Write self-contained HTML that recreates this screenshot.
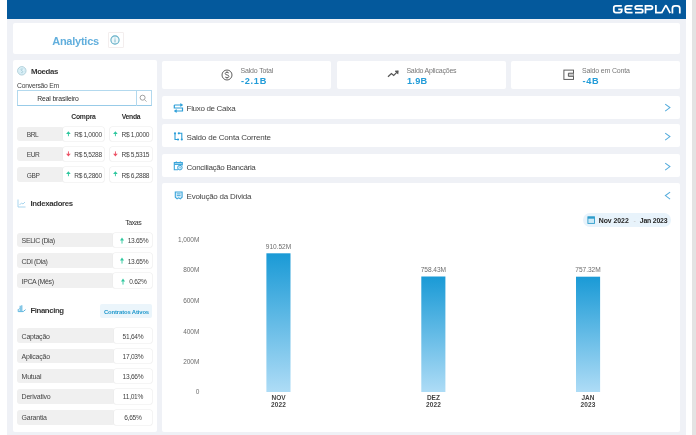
<!DOCTYPE html>
<html><head><meta charset="utf-8">
<style>
*{margin:0;padding:0;box-sizing:border-box}
html,body{width:696px;height:435px;overflow:hidden;background:#fff;font-family:"Liberation Sans",sans-serif;color:#555}
.a{position:absolute}
.t{position:absolute;white-space:nowrap;line-height:1}
.card{position:absolute;background:#fff;border-radius:2px}
#wrap{left:7px;top:18px;width:678.8px;height:417px;background:#eff1f6}
#hdr{left:7px;top:0;width:679px;height:18.6px;background:#04599c}
#sb{left:692px;top:0;width:4px;height:435px;background:#e3e3e3}
.row{position:absolute;left:17px;width:135px;height:14.8px}
.lab{position:absolute;left:0;top:0;height:100%;background:#f0f0f0;border-radius:3px}
.cell{position:absolute;top:0;height:100%;background:#fff;border-radius:2px;box-shadow:0 0 0 0.6px #ececec}
.sm{font-size:6.3px;color:#555}
.hd{font-size:7.6px;letter-spacing:-0.2px;font-weight:bold;color:#333}
.nav{font-size:7.4px;color:#555}
</style></head><body><div style="position:absolute;left:0;top:0;width:696px;height:435px;overflow:hidden;filter:blur(0.3px)">
<div class="a" id="wrap"></div>
<div class="a" id="hdr"></div>
<div class="a" id="sb"></div>

<!-- GESPLAN logo -->
<svg class="a" style="left:612px;top:4px" width="70" height="11" viewBox="0 0 70 11" fill="none" stroke="#fff" stroke-width="1.75">
  <path d="M9.8 1.8 H3.8 Q1.8 1.8 1.8 3.8 V6.6 Q1.8 8.6 3.8 8.6 H7.8 Q9.8 8.6 9.8 6.6 V5.4 H6.2"/>
  <path d="M20.6 1.8 H15.3 Q13.3 1.8 13.3 3.8 V6.6 Q13.3 8.6 15.3 8.6 H20.6 M13.5 5.2 H19.6"/>
  <path d="M30.8 1.8 H25 Q23.2 1.8 23.2 3.5 Q23.2 5.2 25 5.2 H29 Q30.8 5.2 30.8 6.9 Q30.8 8.6 29 8.6 H23"/>
  <path d="M33.5 9.4 V1.8 H38.6 Q40.5 1.8 40.5 3.6 Q40.5 5.4 38.6 5.4 H33.5"/>
  <path d="M43.9 1 V8.6 H49.6"/>
  <path d="M49.5 9.2 L53.5 1.9 Q53.9 1.2 54.3 1.9 L58.2 9.2"/>
  <path d="M60.4 9.4 V4.4 Q60.4 1.8 63 1.8 H65.2 Q67.8 1.8 67.8 4.4 V9.4"/>
</svg>

<!-- Analytics card -->
<div class="card" style="left:12.5px;top:23.2px;width:667.5px;height:31.3px"></div>
<div class="a" style="left:107.5px;top:32.3px;width:16px;height:15.7px;border:0.7px solid #f3eeee;border-radius:1px"></div>
<svg class="a" style="left:110.4px;top:34.9px" width="10" height="10" viewBox="0 0 10 10"><circle cx="5" cy="5" r="4.1" fill="#eef8fb" stroke="#62aec6" stroke-width="1.1"/><path d="M5 4.3V7.4M5 2.7V3.5" stroke="#7db9cc" stroke-width="1"/></svg>

<!-- Left card -->
<div class="card" style="left:12.5px;top:60px;width:144.2px;height:371.5px"></div>
<svg class="a" style="left:16.8px;top:66px" width="10" height="10" viewBox="0 0 10 10"><circle cx="4.8" cy="4.8" r="4.2" fill="#e2f4fa" stroke="#a7c9d5" stroke-width="0.9"/><circle cx="4.8" cy="4.8" r="2.9" fill="none" stroke="#c9e6f0" stroke-width="0.6"/><path d="M5.9 3.4 Q5.6 3 4.8 3 Q3.8 3 3.8 3.8 Q3.8 4.6 4.8 4.7 Q5.8 4.8 5.8 5.7 Q5.8 6.5 4.8 6.5 Q4 6.5 3.7 6" fill="none" stroke="#95c0cf" stroke-width="0.7"/></svg>
<div class="a" style="left:17px;top:90.3px;width:135.4px;height:15.4px;border:0.8px solid #b3d9ee;border-bottom:1.2px solid #98cbe8"></div>
<div class="a" style="left:136.2px;top:90.5px;width:0.8px;height:15px;background:#b3d9ee"></div>
<svg class="a" style="left:138.8px;top:93.6px" width="9" height="9" viewBox="0 0 9 9"><circle cx="3.6" cy="3.7" r="2.5" fill="none" stroke="#a0a0a0" stroke-width="1"/><path d="M5.4 5.5 L7.6 7.6" stroke="#a8a8a8" stroke-width="0.9"/></svg>

<!-- currency rows -->
<div class="row" style="top:126.5px"><div class="lab" style="width:47px"></div><div class="cell" style="left:46px;width:41.3px"></div><div class="cell" style="left:93px;width:42.1px"></div></div>
<div class="row" style="top:146.7px"><div class="lab" style="width:47px"></div><div class="cell" style="left:46px;width:41.3px"></div><div class="cell" style="left:93px;width:42.1px"></div></div>
<div class="row" style="top:166.9px"><div class="lab" style="width:47px"></div><div class="cell" style="left:46px;width:41.3px"></div><div class="cell" style="left:93px;width:42.1px"></div></div>


<svg width="0" height="0" style="position:absolute"><defs>
<g id="up"><path d="M2.4 0.2 L4.7 3 H0.1 Z" fill="#2ec79e"/><rect x="1.95" y="2.8" width="0.9" height="2.4" fill="#2ec79e"/></g>
<g id="dn"><path d="M2.4 5.6 L4.7 2.8 H0.1 Z" fill="#ec5063"/><rect x="1.95" y="0.4" width="0.9" height="2.6" fill="#ec5063"/></g>
<g id="up2"><path d="M2 0.4 L4 3.4 H0 Z" fill="#2ec79e"/><rect x="1.55" y="3.2" width="0.9" height="3.4" fill="#2ec79e"/></g>
</defs></svg>

<svg class="a" style="left:65.6px;top:130.8px" width="5" height="6"><use href="#up"/></svg>
<svg class="a" style="left:113px;top:130.8px" width="5" height="6"><use href="#up"/></svg>

<svg class="a" style="left:65.6px;top:151.4px" width="5" height="6"><use href="#dn"/></svg>
<svg class="a" style="left:113px;top:151.4px" width="5" height="6"><use href="#dn"/></svg>

<svg class="a" style="left:65.6px;top:171.2px" width="5" height="6"><use href="#up"/></svg>
<svg class="a" style="left:113px;top:171.2px" width="5" height="6"><use href="#up"/></svg>

<!-- Indexadores -->
<svg class="a" style="left:17px;top:199px" width="9" height="9" viewBox="0 0 9 9" fill="none" stroke="#9fd0ec" stroke-width="0.9"><path d="M1 0.5 V8 H8.5"/><path d="M2.5 6 L4.5 4 L6 5 L8 3"/></svg>

<div class="row" style="top:232.6px"><div class="lab" style="width:97px"></div><div class="cell" style="left:96px;width:39.3px"></div></div>
<div class="row" style="top:252.8px"><div class="lab" style="width:97px"></div><div class="cell" style="left:96px;width:39.3px"></div></div>
<div class="row" style="top:273px"><div class="lab" style="width:97px"></div><div class="cell" style="left:96px;width:39.3px"></div></div>
<svg class="a" style="left:119.5px;top:237.2px" width="4" height="8"><use href="#up2"/></svg>
<svg class="a" style="left:119.5px;top:257.4px" width="4" height="8"><use href="#up2"/></svg>
<svg class="a" style="left:121.3px;top:277.6px" width="4" height="8"><use href="#up2"/></svg>

<!-- Financing -->
<svg class="a" style="left:17px;top:304px" width="10" height="10" viewBox="0 0 10 10" fill="none" stroke="#5db5de" stroke-width="1"><path d="M1.2 5.2 V7.6 H6.2 L8.6 5.6" /><path d="M3.2 7 V1.8 M4.8 7 V1.2" stroke-width="1.1"/><path d="M1.6 5.3 L2.6 4.6" /></svg>
<div class="a" style="left:99.9px;top:304px;width:52px;height:13.7px;background:#ebf5fb;border-radius:2px"></div>

<div class="row" style="top:328.3px"><div class="lab" style="width:98px"></div><div class="cell" style="left:97.4px;width:37.4px"></div></div>
<div class="row" style="top:348.5px"><div class="lab" style="width:98px"></div><div class="cell" style="left:97.4px;width:37.4px"></div></div>
<div class="row" style="top:368.7px"><div class="lab" style="width:98px"></div><div class="cell" style="left:97.4px;width:37.4px"></div></div>
<div class="row" style="top:388.9px"><div class="lab" style="width:98px"></div><div class="cell" style="left:97.4px;width:37.4px"></div></div>
<div class="row" style="top:409.8px"><div class="lab" style="width:98px"></div><div class="cell" style="left:97.4px;width:37.4px"></div></div>

<!-- KPI cards -->
<div class="card" style="left:162.4px;top:60.8px;width:168.6px;height:28.6px"></div>
<div class="card" style="left:337px;top:60.8px;width:168.6px;height:28.6px"></div>
<div class="card" style="left:511px;top:60.8px;width:169px;height:28.6px"></div>

<svg class="a" style="left:221px;top:68.6px" width="12" height="12" viewBox="0 0 12 12" fill="none" stroke="#555" stroke-width="0.95"><circle cx="6" cy="6" r="5"/><path d="M7.9 4.2 Q7.4 3.3 6 3.3 Q4.2 3.3 4.2 4.6 Q4.2 5.7 6 5.9 Q7.9 6.1 7.9 7.4 Q7.9 8.7 6 8.7 Q4.6 8.7 4.1 7.8 M6 2.4 V3.3 M6 8.7 V9.6" stroke-width="0.9"/></svg>

<svg class="a" style="left:387px;top:70px" width="13" height="9" viewBox="0 0 13 9" fill="none" stroke="#555" stroke-width="1.25"><path d="M1 6.8 L4.4 3.5 L6.7 5.4 L9.8 2.4"/><path d="M8 1 L11.3 0.8 L11 4.1 Z" fill="#555" stroke-width="0.6"/></svg>

<svg class="a" style="left:563px;top:69px" width="12" height="12" viewBox="0 0 12 12" fill="none" stroke="#555" stroke-width="0.95"><rect x="0.9" y="1.1" width="9.6" height="9.3"/><path d="M10.5 4.2 H5.4 V7.3 H10.5" fill="#ccc"/></svg>

<!-- Nav cards -->
<div class="card" style="left:162.4px;top:95.6px;width:517.6px;height:23px"></div>
<div class="card" style="left:162.4px;top:124.4px;width:517.6px;height:23px"></div>
<div class="card" style="left:162.4px;top:154.2px;width:517.6px;height:23px"></div>
<div class="card" style="left:162.4px;top:183px;width:517.6px;height:248.5px"></div>

<svg class="a" style="left:173px;top:102.5px" width="11" height="10" viewBox="0 0 11 10" fill="none" stroke="#2b9ed8" stroke-width="1.2"><path d="M1.3 2 H9.2 M1.3 2 V5 H9.5 V8 H1.8"/><path d="M7.6 0.6 L9.6 2 L7.6 3.4 Z" fill="#2b9ed8" stroke-width="0.6"/><path d="M3.4 6.6 L1.4 8 L3.4 9.4 Z" fill="#2b9ed8" stroke-width="0.6"/></svg>
<svg class="a" style="left:173px;top:132px" width="11" height="10" viewBox="0 0 11 10" fill="none" stroke="#2b9ed8" stroke-width="1.1"><path d="M2 1.3 V7.5 H5"/><path d="M5.8 1.3 H8.8 V7.5"/><circle cx="2" cy="1.3" r="1.1" fill="#2b9ed8" stroke="none"/><circle cx="5" cy="7.5" r="1.1" fill="#2b9ed8" stroke="none"/><circle cx="5.8" cy="1.3" r="1.1" fill="#2b9ed8" stroke="none"/><circle cx="8.8" cy="7.5" r="1.1" fill="#2b9ed8" stroke="none"/></svg>
<svg class="a" style="left:173px;top:161px" width="11" height="10" viewBox="0 0 11 10" fill="none" stroke="#3aa5da" stroke-width="1.1"><path d="M5 8.8 H1.3 V1.6 H9.3 V4.5"/><path d="M1.3 3.3 H9.3" stroke-width="1.3"/><path d="M3.3 0.3 V2 M7.3 0.3 V2" stroke-width="0.9"/><circle cx="6.9" cy="6.6" r="2.3" fill="#d7eefa" stroke-width="1"/><path d="M6.9 5.5 V6.8 H7.9" stroke-width="0.6"/></svg>
<svg class="a" style="left:173.8px;top:191px" width="10" height="10" viewBox="0 0 10 10" fill="none" stroke="#3aa5da" stroke-width="1.1"><path d="M1.3 1 H8.1 V6.2 L6.3 7.9 L4.7 6.9 L3.1 7.9 L1.3 6.2 Z" fill="#e3f2fb"/><path d="M2.8 2.9 H6.6 M2.8 4.6 H6.6" stroke-width="0.9"/></svg>

<svg class="a" style="left:664px;top:103px" width="8" height="10" viewBox="0 0 8 10" fill="none" stroke="#55acdc" stroke-width="1.05"><path d="M1.2 1.1 L5.9 4.6 L1.2 8.1"/></svg>
<svg class="a" style="left:664px;top:132px" width="8" height="10" viewBox="0 0 8 10" fill="none" stroke="#55acdc" stroke-width="1.05"><path d="M1.2 1.1 L5.9 4.6 L1.2 8.1"/></svg>
<svg class="a" style="left:664px;top:161.8px" width="8" height="10" viewBox="0 0 8 10" fill="none" stroke="#55acdc" stroke-width="1.05"><path d="M1.2 1.1 L5.9 4.6 L1.2 8.1"/></svg>
<svg class="a" style="left:664px;top:191px" width="8" height="10" viewBox="0 0 8 10" fill="none" stroke="#55acdc" stroke-width="1.05"><path d="M6.1 1.1 L1.4 4.6 L6.1 8.1"/></svg>

<!-- date pill -->
<div class="a" style="left:583px;top:213.4px;width:88.4px;height:14px;background:#e8f3fb;border-radius:7px"></div>
<svg class="a" style="left:586.7px;top:216.4px" width="8" height="8" viewBox="0 0 8 8" fill="none" stroke="#2f9dcc" stroke-width="0.9"><rect x="0.9" y="0.8" width="6.6" height="6.6" fill="#cdeaf7"/><rect x="0.9" y="0.8" width="6.6" height="1.9" fill="#2f9dcc" stroke="none"/></svg>

<!-- chart -->

<svg class="a" style="left:0;top:0" width="696" height="435">
<defs><linearGradient id="bg" x1="0" y1="0" x2="0" y2="1"><stop offset="0" stop-color="#1a9ad6"/><stop offset="1" stop-color="#aedcf6"/></linearGradient></defs>
<rect x="266.4" y="253.3" width="24.1" height="138.7" fill="url(#bg)"/>
<rect x="421.3" y="276.5" width="24.1" height="115.5" fill="url(#bg)"/>
<rect x="576" y="276.7" width="24.1" height="115.3" fill="url(#bg)"/>
</svg>


<div class="t" style="left:52.20px;top:36.00px;font-size:11px;color:#62afdd;font-weight:bold;letter-spacing:-0.247px">Analytics</div>
<div class="t" style="left:31.00px;top:68.00px;font-size:7.8px;color:#363636;font-weight:bold;letter-spacing:-0.339px">Moedas</div>
<div class="t" style="left:17.00px;top:83.00px;font-size:6.8px;color:#444;letter-spacing:-0.246px">Conversão Em</div>
<div class="t" style="left:37.30px;top:96.00px;font-size:6.8px;color:#2e2e2e;letter-spacing:-0.137px">Real brasileiro</div>
<div class="t" style="left:71.20px;top:114.00px;font-size:6.8px;color:#2e2e2e;font-weight:bold;letter-spacing:-0.198px">Compra</div>
<div class="t" style="left:121.70px;top:114.00px;font-size:6.8px;color:#2e2e2e;font-weight:bold;letter-spacing:-0.286px">Venda</div>
<div class="t" style="left:26.80px;top:132.00px;font-size:6.6px;color:#444;letter-spacing:-0.420px">BRL</div>
<div class="t" style="left:74.20px;top:132.00px;font-size:6.6px;color:#444;letter-spacing:-0.315px">R$ 1,0000</div>
<div class="t" style="left:121.50px;top:132.00px;font-size:6.6px;color:#444;letter-spacing:-0.315px">R$ 1,0000</div>
<div class="t" style="left:26.80px;top:152.00px;font-size:6.6px;color:#444;letter-spacing:-0.420px">EUR</div>
<div class="t" style="left:74.20px;top:152.00px;font-size:6.6px;color:#444;letter-spacing:-0.315px">R$ 5,5288</div>
<div class="t" style="left:121.50px;top:152.00px;font-size:6.6px;color:#444;letter-spacing:-0.315px">R$ 5,5315</div>
<div class="t" style="left:26.80px;top:173.00px;font-size:6.6px;color:#444;letter-spacing:-0.420px">GBP</div>
<div class="t" style="left:74.20px;top:173.00px;font-size:6.6px;color:#444;letter-spacing:-0.315px">R$ 6,2860</div>
<div class="t" style="left:121.50px;top:173.00px;font-size:6.6px;color:#444;letter-spacing:-0.315px">R$ 6,2888</div>
<div class="t" style="left:30.40px;top:200.00px;font-size:7.8px;color:#363636;font-weight:bold;letter-spacing:-0.312px">Indexadores</div>
<div class="t" style="left:125.20px;top:219.00px;font-size:7px;color:#333;letter-spacing:-0.439px">Taxas</div>
<div class="t" style="left:21.60px;top:237.00px;font-size:7px;color:#444;letter-spacing:-0.380px">SELIC (Dia)</div>
<div class="t" style="left:127.70px;top:238.00px;font-size:6.6px;color:#444;letter-spacing:-0.300px">13.65%</div>
<div class="t" style="left:21.60px;top:258.00px;font-size:7px;color:#444;letter-spacing:-0.380px">CDI (Dia)</div>
<div class="t" style="left:127.70px;top:259.00px;font-size:6.6px;color:#444;letter-spacing:-0.300px">13.65%</div>
<div class="t" style="left:21.60px;top:278.00px;font-size:7px;color:#444;letter-spacing:-0.380px">IPCA (Mês)</div>
<div class="t" style="left:129.30px;top:279.00px;font-size:6.6px;color:#444;letter-spacing:-0.300px">0.62%</div>
<div class="t" style="left:30.40px;top:307.00px;font-size:7.8px;color:#363636;font-weight:bold;letter-spacing:-0.392px">Financing</div>
<div class="t" style="left:104.00px;top:310.00px;font-size:5.9px;color:#1f98cc;font-weight:bold;letter-spacing:-0.141px">Contratos Ativos</div>
<div class="t" style="left:21.60px;top:333.00px;font-size:7px;color:#444;letter-spacing:-0.230px">Captação</div>
<div class="t" style="left:114.40px;top:334.00px;font-size:6.6px;color:#444;letter-spacing:-0.280px;width:37.4px;text-align:center;text-indent:-0.280px">51,64%</div>
<div class="t" style="left:21.60px;top:353.00px;font-size:7px;color:#444;letter-spacing:-0.230px">Aplicação</div>
<div class="t" style="left:114.40px;top:354.00px;font-size:6.6px;color:#444;letter-spacing:-0.280px;width:37.4px;text-align:center;text-indent:-0.280px">17,03%</div>
<div class="t" style="left:21.60px;top:373.00px;font-size:7px;color:#444;letter-spacing:-0.230px">Mutual</div>
<div class="t" style="left:114.40px;top:374.00px;font-size:6.6px;color:#444;letter-spacing:-0.280px;width:37.4px;text-align:center;text-indent:-0.280px">13,66%</div>
<div class="t" style="left:21.60px;top:393.00px;font-size:7px;color:#444;letter-spacing:-0.230px">Derivativo</div>
<div class="t" style="left:114.40px;top:394.00px;font-size:6.6px;color:#444;letter-spacing:-0.280px;width:37.4px;text-align:center;text-indent:-0.280px">11,01%</div>
<div class="t" style="left:21.60px;top:414.00px;font-size:7px;color:#444;letter-spacing:-0.230px">Garantia</div>
<div class="t" style="left:114.40px;top:415.00px;font-size:6.6px;color:#444;letter-spacing:-0.280px;width:37.4px;text-align:center;text-indent:-0.280px">6,65%</div>
<div class="t" style="left:240.50px;top:67.00px;font-size:7px;color:#777;letter-spacing:-0.165px">Saldo Total</div>
<div class="t" style="left:241.00px;top:77.00px;font-size:9.2px;color:#229cd8;font-weight:bold;letter-spacing:0.706px">-2.1B</div>
<div class="t" style="left:406.40px;top:67.00px;font-size:7px;color:#777;letter-spacing:-0.208px">Saldo Aplicações</div>
<div class="t" style="left:406.90px;top:77.00px;font-size:9.2px;color:#229cd8;font-weight:bold;letter-spacing:0.320px">1.9B</div>
<div class="t" style="left:582.00px;top:67.00px;font-size:7px;color:#777;letter-spacing:-0.179px">Saldo em Conta</div>
<div class="t" style="left:582.50px;top:77.00px;font-size:9.2px;color:#229cd8;font-weight:bold;letter-spacing:0.629px">-4B</div>
<div class="t" style="left:186.60px;top:105.00px;font-size:8px;color:#444;letter-spacing:-0.326px">Fluxo de Caixa</div>
<div class="t" style="left:186.60px;top:134.00px;font-size:8px;color:#444;letter-spacing:-0.183px">Saldo de Conta Corrente</div>
<div class="t" style="left:186.60px;top:164.00px;font-size:8px;color:#444;letter-spacing:-0.313px">Conciliação Bancária</div>
<div class="t" style="left:186.60px;top:193.00px;font-size:8px;color:#444;letter-spacing:-0.241px">Evolução da Dívida</div>
<div class="t" style="left:598.70px;top:218.00px;font-size:6.9px;color:#262626;font-weight:bold;letter-spacing:-0.033px">Nov 2022</div>
<div class="t" style="left:633.60px;top:218.00px;font-size:6.9px;color:#c4c4c4">-</div>
<div class="t" style="left:639.80px;top:218.00px;font-size:6.9px;color:#262626;font-weight:bold;letter-spacing:-0.191px">Jan 2023</div>
<div class="t" style="left:150.00px;top:237.00px;font-size:6.5px;color:#6e6e6e;letter-spacing:-0.050px;width:49.3px;text-align:right;margin-right:0">1,000M</div>
<div class="t" style="left:150.00px;top:267.00px;font-size:6.5px;color:#6e6e6e;letter-spacing:-0.050px;width:49.3px;text-align:right;margin-right:0">800M</div>
<div class="t" style="left:150.00px;top:298.00px;font-size:6.5px;color:#6e6e6e;letter-spacing:-0.050px;width:49.3px;text-align:right;margin-right:0">600M</div>
<div class="t" style="left:150.00px;top:329.00px;font-size:6.5px;color:#6e6e6e;letter-spacing:-0.050px;width:49.3px;text-align:right;margin-right:0">400M</div>
<div class="t" style="left:150.00px;top:359.00px;font-size:6.5px;color:#6e6e6e;letter-spacing:-0.050px;width:49.3px;text-align:right;margin-right:0">200M</div>
<div class="t" style="left:150.00px;top:389.00px;font-size:6.5px;color:#6e6e6e;letter-spacing:-0.050px;width:49.3px;text-align:right;margin-right:0">0</div>
<div class="t" style="left:248.50px;top:244.00px;font-size:6.6px;color:#6e6e6e;letter-spacing:-0.050px;width:60px;text-align:center;text-indent:-0.050px">910.52M</div>
<div class="t" style="left:403.40px;top:267.00px;font-size:6.6px;color:#6e6e6e;letter-spacing:-0.050px;width:60px;text-align:center;text-indent:-0.050px">758.43M</div>
<div class="t" style="left:558.00px;top:267.00px;font-size:6.6px;color:#6e6e6e;letter-spacing:-0.050px;width:60px;text-align:center;text-indent:-0.050px">757.32M</div>
<div class="t" style="left:248.50px;top:395.00px;font-size:6.5px;color:#444;font-weight:bold;width:60px;text-align:center">NOV</div>
<div class="t" style="left:248.50px;top:402.00px;font-size:6.5px;color:#444;font-weight:bold;letter-spacing:0.150px;width:60px;text-align:center;text-indent:0.150px">2022</div>
<div class="t" style="left:403.40px;top:395.00px;font-size:6.5px;color:#444;font-weight:bold;width:60px;text-align:center">DEZ</div>
<div class="t" style="left:403.40px;top:402.00px;font-size:6.5px;color:#444;font-weight:bold;letter-spacing:0.150px;width:60px;text-align:center;text-indent:0.150px">2022</div>
<div class="t" style="left:558.00px;top:395.00px;font-size:6.5px;color:#444;font-weight:bold;width:60px;text-align:center">JAN</div>
<div class="t" style="left:558.00px;top:402.00px;font-size:6.5px;color:#444;font-weight:bold;letter-spacing:0.150px;width:60px;text-align:center;text-indent:0.150px">2023</div>
</div></body></html>
